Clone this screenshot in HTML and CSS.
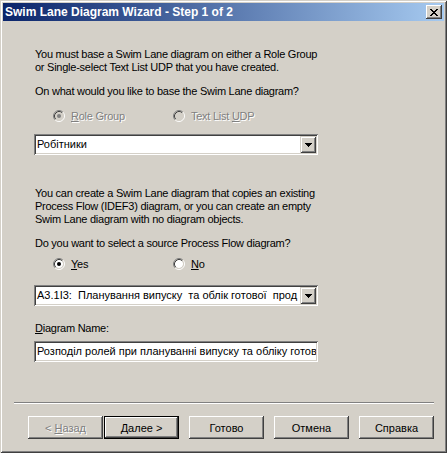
FILE: index.html
```html
<!DOCTYPE html>
<html>
<head>
<meta charset="utf-8">
<link rel="stylesheet" href="styles.css">
</head>
<body>
<div class="window">
  <div class="titlebar">
    <span class="title">Swim Lane Diagram Wizard - Step 1 of 2</span>
    <span class="close">
      <svg width="8" height="7" viewBox="0 0 8 7"><path d="M0 0h2v1h-2zM6 0h2v1h-2zM1 1h2v1h-2zM5 1h2v1h-2zM2 2h4v1h-4zM3 3h2v1h-2zM2 4h4v1h-4zM1 5h2v1h-2zM5 5h2v1h-2zM0 6h2v1h-2zM6 6h2v1h-2z" fill="#000"/></svg>
    </span>
  </div>
  <div class="content">
    <p class="para p1">You must base a Swim Lane diagram on either a Role Group<br>or Single-select Text List UDP that you have created.</p>
    <p class="para q1">On what would you like to base the Swim Lane diagram?</p>
    <div class="radios r1">
      <label class="radio disabled r-first">
        <svg class="rb" width="12" height="12" viewBox="0 0 12 12"><circle cx="6" cy="6" r="4" fill="#d4d0c8"/><path d="M2.11 9.89A5.5 5.5 0 0 1 9.89 2.11" stroke="#808080" fill="none"/><path d="M9.89 2.11A5.5 5.5 0 0 1 2.11 9.89" stroke="#fff" fill="none"/><path d="M2.82 9.18A4.5 4.5 0 0 1 9.18 2.82" stroke="#404040" fill="none"/><path d="M9.18 2.82A4.5 4.5 0 0 1 2.82 9.18" stroke="#d4d0c8" fill="none"/><circle cx="6" cy="6" r="2" fill="#808080"/></svg>
        <span class="lbl"><u>R</u>ole Group</span>
      </label>
      <label class="radio disabled r-second">
        <svg class="rb" width="12" height="12" viewBox="0 0 12 12"><circle cx="6" cy="6" r="4" fill="#d4d0c8"/><path d="M2.11 9.89A5.5 5.5 0 0 1 9.89 2.11" stroke="#808080" fill="none"/><path d="M9.89 2.11A5.5 5.5 0 0 1 2.11 9.89" stroke="#fff" fill="none"/><path d="M2.82 9.18A4.5 4.5 0 0 1 9.18 2.82" stroke="#404040" fill="none"/><path d="M9.18 2.82A4.5 4.5 0 0 1 2.82 9.18" stroke="#d4d0c8" fill="none"/></svg>
        <span class="lbl">Text List <u>U</u>DP</span>
      </label>
    </div>
    <div class="combo c1">
      <span class="combo-text">Робітники</span>
      <span class="drop"><svg width="7" height="4" viewBox="0 0 7 4"><path d="M0 0h7v1h-1v1h-1v1h-1v1h-1v-1h-1v-1h-1v-1h-1z" fill="#000"/></svg></span>
    </div>
    <p class="para p2">You can create a Swim Lane diagram that copies an existing<br>Process Flow (IDEF3) diagram, or you can create an empty<br>Swim Lane diagram with no diagram objects.</p>
    <p class="para q2">Do you want to select a source Process Flow diagram?</p>
    <div class="radios r2">
      <label class="radio r-first">
        <svg class="rb" width="12" height="12" viewBox="0 0 12 12"><circle cx="6" cy="6" r="4" fill="#fff"/><path d="M2.11 9.89A5.5 5.5 0 0 1 9.89 2.11" stroke="#808080" fill="none"/><path d="M9.89 2.11A5.5 5.5 0 0 1 2.11 9.89" stroke="#fff" fill="none"/><path d="M2.82 9.18A4.5 4.5 0 0 1 9.18 2.82" stroke="#404040" fill="none"/><path d="M9.18 2.82A4.5 4.5 0 0 1 2.82 9.18" stroke="#d4d0c8" fill="none"/><circle cx="6" cy="6" r="2" fill="#000"/></svg>
        <span class="lbl"><u>Y</u>es</span>
      </label>
      <label class="radio r-second">
        <svg class="rb" width="12" height="12" viewBox="0 0 12 12"><circle cx="6" cy="6" r="4" fill="#fff"/><path d="M2.11 9.89A5.5 5.5 0 0 1 9.89 2.11" stroke="#808080" fill="none"/><path d="M9.89 2.11A5.5 5.5 0 0 1 2.11 9.89" stroke="#fff" fill="none"/><path d="M2.82 9.18A4.5 4.5 0 0 1 9.18 2.82" stroke="#404040" fill="none"/><path d="M9.18 2.82A4.5 4.5 0 0 1 2.82 9.18" stroke="#d4d0c8" fill="none"/></svg>
        <span class="lbl"><u>N</u>o</span>
      </label>
    </div>
    <div class="combo c2">
      <span class="combo-text">A3.1I3:  Планування випуску  та облік готової  прод</span>
      <span class="drop"><svg width="7" height="4" viewBox="0 0 7 4"><path d="M0 0h7v1h-1v1h-1v1h-1v1h-1v-1h-1v-1h-1v-1h-1z" fill="#000"/></svg></span>
    </div>
    <p class="para dn"><u>D</u>iagram Name:</p>
    <div class="textbox"><span class="combo-text">Розподіл ролей при плануванні випуску та обліку готов</span></div>
  </div>
  <div class="separator"></div>
  <div class="buttons">
    <button class="btn disabled">&lt; <u>Н</u>азад</button>
    <button class="btn default"><u>Д</u>алее &gt;</button>
    <button class="btn gap">Готово</button>
    <button class="btn gap">Отмена</button>
    <button class="btn gap">Справка</button>
  </div>
</div>
</body>
</html>
```
FILE: styles.css
```css
html, body {
  margin: 0;
  padding: 0;
  background: #d4d0c8;
}
.window {
  width: 447px;
  height: 453px;
  box-sizing: border-box;
  padding: 3px;
  background: #d4d0c8;
  box-shadow: inset 1px 1px 0 #d4d0c8, inset -1px -1px 0 #404040, inset 2px 2px 0 #fff, inset -2px -2px 0 #808080;
  font-family: "Liberation Sans", Arial, sans-serif;
  font-size: 11px;
  letter-spacing: -0.25px;
  color: #000;
  display: flex;
  flex-direction: column;
}
.titlebar {
  height: 18px;
  background: linear-gradient(to right, #0a246a, #a6caf0);
  display: flex;
  align-items: center;
  justify-content: space-between;
  padding: 0 2px 0 2px;
}
.title {
  color: #fff;
  font-weight: bold;
  font-size: 12px;
  letter-spacing: 0;
  white-space: nowrap;
}
.close {
  width: 16px;
  height: 14px;
  box-sizing: border-box;
  background: #d4d0c8;
  box-shadow: inset -1px -1px 0 #404040, inset 1px 1px 0 #fff, inset -2px -2px 0 #808080;
  display: flex;
  align-items: center;
  justify-content: center;
}
.close svg { display: block; margin-left: -1px; }
.content {
  padding-left: 32px;
  display: flex;
  flex-direction: column;
  align-items: flex-start;
}
.para {
  margin: 0;
  line-height: 13px;
  white-space: nowrap;
}
.p1 { margin-top: 27px; }
.q1 { margin-top: 11px; }
.r1 { margin-top: 11px; }
.c1 { margin-top: 11px; }
.p2 { margin-top: 32px; }
.q2 { margin-top: 11px; }
.r2 { margin-top: 7px; }
.c2 { margin-top: 14px; }
.dn { margin-top: 16px; }
.textbox { margin-top: 6px; }
.radios {
  display: flex;
  height: 14px;
  align-items: center;
  padding-left: 18px;
}
.radio {
  display: flex;
  align-items: center;
  gap: 6px;
  line-height: 13px;
}
.r-first { width: 120px; }
.rb { display: block; }
.radio.disabled .lbl {
  color: #808080;
  text-shadow: 1px 1px 0 #fff;
}
.combo, .textbox {
  width: 284px;
  height: 21px;
  box-sizing: border-box;
  margin-left: -1px;
  background: #fff;
  box-shadow: inset 1px 1px 0 #808080, inset -1px -1px 0 #fff, inset 2px 2px 0 #404040, inset -2px -2px 0 #d4d0c8;
  display: flex;
  align-items: center;
  padding: 2px;
  overflow: hidden;
}
.combo-text {
  flex: 1;
  overflow: hidden;
  white-space: pre;
  padding-left: 1px;
  line-height: 17px;
  font-size: 11px;
  letter-spacing: 0;
}
.drop {
  width: 16px;
  height: 17px;
  box-sizing: border-box;
  background: #d4d0c8;
  box-shadow: inset 1px 1px 0 #d4d0c8, inset -1px -1px 0 #404040, inset 2px 2px 0 #fff, inset -2px -2px 0 #808080;
  display: flex;
  align-items: center;
  justify-content: center;
  flex: none;
}
.drop svg { display: block; }
.separator {
  margin: 0 10px 0 11px;
  margin-top: auto;
  border-top: 1px solid #808080;
  border-bottom: 1px solid #fff;
  height: 0;
}
.buttons {
  display: flex;
  padding-left: 25px;
  margin-top: 12px;
  margin-bottom: 11px;
}
.btn {
  width: 75px;
  height: 23px;
  box-sizing: border-box;
  border: none;
  padding: 0;
  margin: 0;
  background: #d4d0c8;
  font-family: "Liberation Sans", Arial, sans-serif;
  font-size: 11px;
  letter-spacing: 0;
  color: #000;
  box-shadow: inset -1px -1px 0 #404040, inset 1px 1px 0 #fff, inset -2px -2px 0 #808080;
}
.btn.default {
  margin-left: 1px;
  box-shadow: inset 0 0 0 1px #000, inset -2px -2px 0 #404040, inset 2px 2px 0 #fff, inset -3px -3px 0 #808080;
}
.btn.gap { margin-left: 10px; }
.btn.disabled {
  color: #808080;
  text-shadow: 1px 1px 0 #fff;
}
```
